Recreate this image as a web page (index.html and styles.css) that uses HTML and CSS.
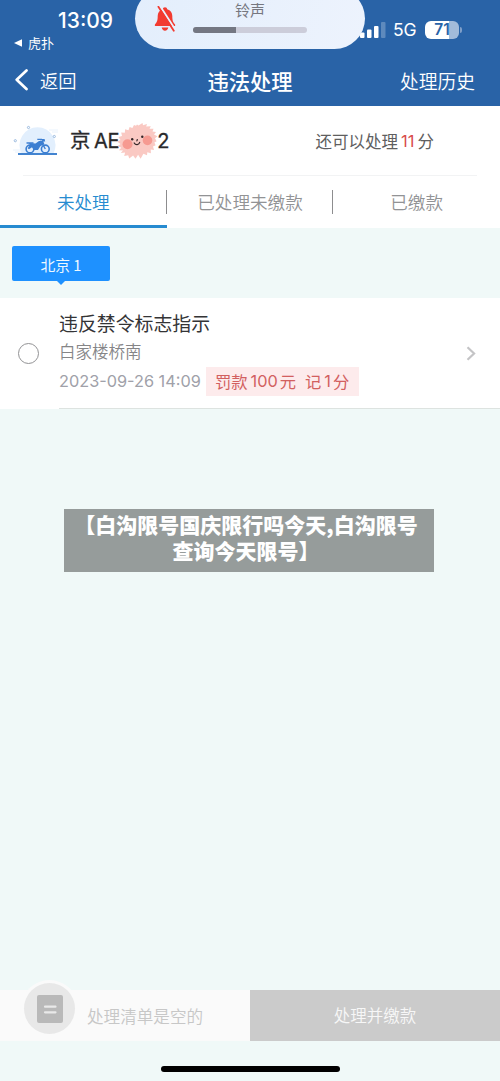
FILE: index.html
```html
<!DOCTYPE html>
<html lang="zh-CN">
<head>
<meta charset="utf-8">
<title>违法处理</title>
<link rel="stylesheet" href="styles.css">
</head>
<body>
<div class="screen">
  <header class="header">
    <div class="status">
      <div class="status-left">
        <span class="clock">13:09</span>
        <span class="back-app"><svg width="8" height="8" viewBox="0 0 8 8"><path d="M0 4 8 .2v7.6z" fill="#fff"/></svg>虎扑</span>
      </div>
      <div class="status-right">
        <svg class="signal" width="32" height="17" viewBox="0 0 32 17" fill="#fff"><rect x="3" y="10.5" width="4.5" height="5.5" rx="1"/><rect x="10" y="7.5" width="4.5" height="8.5" rx="1"/><rect x="17" y="4" width="4.5" height="12" rx="1"/><rect x="24" y="0" width="4.5" height="16" rx="1" opacity=".25"/></svg>
        <span class="network">5G</span>
        <span class="battery">71</span>
        <span class="battery-cap"></span>
      </div>
    </div>
    <div class="island">
      <svg class="bell" width="22" height="26" viewBox="0 0 22 26"><path d="M11 1.2c-1.3 0-2.1.8-2.2 2C5.4 4.2 3.7 6.7 3.7 10c0 4.8-.8 6.1-2.6 8.3-.7.9-.3 1.8.8 1.8h18.2c1.1 0 1.5-.9.8-1.8-1.8-2.2-2.6-3.5-2.6-8.3 0-3.3-1.7-5.8-5.1-6.8-.1-1.2-.9-2-2.2-2zM7.7 21.5c.3 2 1.6 3.2 3.3 3.2s3-1.2 3.3-3.2z" fill="#f23b31"/><path d="M6 0 21.5 24" stroke="#e8f1fd" stroke-width="2"/><path d="M4.4.8 19.8 24.8" stroke="#f23b31" stroke-width="1.8" stroke-linecap="round"/></svg>
      <div class="ring">
        <span class="ring-label">铃声</span>
        <div class="ring-track"><div class="ring-level"></div></div>
      </div>
    </div>
    <nav class="nav">
      <div class="nav-back"><svg width="14" height="22" viewBox="0 0 14 22"><path d="M12.5 1.5 2.7 10.7 12.5 20" fill="none" stroke="#fff" stroke-width="2.7" stroke-linecap="round" stroke-linejoin="round"/></svg><span>返回</span></div>
      <h1 class="nav-title">违法处理</h1>
      <div class="nav-history">处理历史</div>
    </nav>
  </header>

  <section class="vehicle">
    <svg class="moto" width="46" height="36" viewBox="0 0 46 36">
      <path d="M8.5 30.5a18 18 0 1 1 32 0z" fill="#e2effd"/>
      <path d="M36 7h9M39 9h6M0 27h9M2 29h7" stroke="#e9f2fc" stroke-width="1"/>
      <g fill="none" stroke="#9bbbe0" stroke-width="1"><circle cx="15.5" cy="4.5" r="1.1"/><circle cx="2.3" cy="17.7" r="1.1"/><circle cx="41.3" cy="13.5" r="1.1"/></g>
      <path d="M5 31h39" stroke="#4384d0" stroke-width="1.9"/>
      <g fill="none" stroke="#3c7fd2"><circle cx="17" cy="26" r="3.9" stroke-width="1.6"/><circle cx="32.3" cy="26" r="3.9" stroke-width="1.6"/><path d="m32.3 26-4.6-8.5M24.3 16.4H29M13.5 20h7" stroke-width="1.4"/></g>
      <path d="m16 20 6.5.5 3.5-2.6 4-.2 1.3 3.3-4 2.2-2.3 3.8h-4.3l-1.7-2.8-3 2-1.4-1 2.3-3.2zM28.3 16h3.3l.6 2.6-2.8-.4z" fill="#3c7fd2"/>
    </svg>
    <div class="plate"><span class="plate-region">京</span><span>AE</span>
      <svg class="sticker" width="42" height="38" viewBox="0 0 42 38"><path d="m17 3 2 .8 1-1.2 1.5.9L25.5 1l.5 2.2L30 2l-.8 2.5 4.6-.2-1.3 2.4 4 .1-1 2.7 3.5.5-2 2.5 3.5 1.8-2.5 1.9 1.6 3-2.2 1.3 1.2 2.8-2.6 1.3 1 3.3-3.3-.3.2 3.7-3.6-1.1-.3 3-3.6-1.4-2.8 5-2.5-4-2.6 4-2.4-3.2-3.9 3-1-3.4-4 .8.9-3.4-4.3.4L6 28.4l-4.2-.1 2.5-2.6L.6 24l3-2L0 19.6l3.5-1.7-2-3 3.5-1-.8-3.3 3.6.2.3-3.5 3.4 1 1.1-3.2 2.8 1z" fill="#fac9c3"/><circle cx="10.5" cy="22.3" r="5" fill="#f69a91"/><circle cx="30.5" cy="18.4" r="4.8" fill="#f69a91"/><g fill="#332426"><circle cx="15.2" cy="17.2" r="1.2"/><circle cx="25.3" cy="14.8" r="1.2"/></g><path d="m20.3 17.5-.4 1.4M17.2 21c1.4 2.3 4.8 2.1 5.5-.6" fill="none" stroke="#332426" stroke-width="1.2" stroke-linecap="round"/></svg><span>2</span></div>
    <div class="points">还可以处理<span class="points-value">11</span>分</div>
  </section>

  <nav class="tabs">
    <div class="tab tab-active">未处理</div>
    <div class="tab">已处理未缴款</div>
    <div class="tab">已缴款</div>
  </nav>

  <div class="city-row"><div class="city">北京 1</div></div>

  <article class="record">
    <span class="radio"></span>
    <div class="record-body">
      <h2 class="record-title">违反禁令标志指示</h2>
      <div class="record-place">白家楼桥南</div>
      <div class="record-meta"><time>2023-09-26 14:09</time><span class="penalty"><span>罚款</span><span class="num">100</span><span>元</span><span class="score">记</span><span class="num">1</span><span>分</span></span></div>
    </div>
    <svg class="chevron" width="10" height="15" viewBox="0 0 10 15"><path d="m1.5 1.2 6.6 6.3-6.6 6.3" fill="none" stroke="#c4c4c6" stroke-width="2.2"/></svg>
  </article>

  <main class="blank">
    <div class="caption">【白沟限号国庆限行吗今天,白沟限号<br>查询今天限号】</div>
  </main>

  <footer class="footer">
    <div class="list">
      <div class="list-icon"><svg width="26" height="28" viewBox="0 0 26 28"><rect width="26" height="28" rx="2" fill="#b9b9b9"/><path d="M8 11.7h10.5M8 17.3h10.5" stroke="#e9e9e9" stroke-width="2.2" stroke-linecap="round"/></svg></div>
      <span>处理清单是空的</span>
    </div>
    <div class="pay">处理并缴款</div>
  </footer>
  <div class="home"><div class="home-bar"></div></div>
</div>
</body>
</html>
```

FILE: styles.css
```css
* { box-sizing: border-box; }
body { margin: 0; background: #f0f9f8; font-family: "Noto Sans CJK SC", sans-serif; }
h1, h2 { margin: 0; }
svg { display: block; flex: none; }
.screen { width: 500px; height: 1081px; display: flex; flex-direction: column; overflow: hidden; background: #f0f9f8; white-space: nowrap; }

.header { position: relative; flex: none; height: 106px; background: #2963a7; color: #fff; }
.status { height: 56px; display: flex; justify-content: space-between; }
.status-left { padding: 8px 0 0 14px; display: flex; flex-direction: column; }
.clock { margin-left: 44px; font: 500 21px/26px Inter, sans-serif; }
.back-app { display: flex; align-items: center; gap: 6px; font-size: 13px; line-height: 17px; }
.status-right { display: flex; align-items: center; height: 22px; margin: 19px 38px 0 0; }
.signal { margin-right: 4px; }
.network { width: 32px; font: 400 17.5px/22px Inter, sans-serif; letter-spacing: -.2px; }
.battery { width: 34px; height: 18px; border-radius: 6px; background: linear-gradient(90deg, #fff 71%, #a2bbda 71%); color: #2963a7; text-align: center; font: 600 15.5px/18px Inter, sans-serif; }
.battery-cap { width: 2px; height: 6px; margin-left: 1px; border-radius: 0 3px 3px 0; background: #7f9fc9; }
.island { position: absolute; left: 135px; top: -12px; width: 230px; height: 61px; border-radius: 31px; background: linear-gradient(100deg, #e3eefc, #edf3fd); display: flex; align-items: flex-start; padding: 18px 0 0 19px; }
.ring { width: 114px; margin: -6px 0 0 17px; text-align: center; }
.ring-label { display: block; color: #76777f; font-size: 15px; line-height: 20px; }
.ring-track { height: 6px; margin-top: 7px; border-radius: 3px; background: #cccdda; overflow: hidden; }
.ring-level { width: 43px; height: 6px; background: #747782; }
.nav { height: 48px; display: grid; grid-template-columns: 1fr auto 1fr; align-items: center; padding: 0 25px 0 14px; font-size: 18.3px; font-weight: 350; }
.nav-back { display: flex; align-items: center; gap: 12px; }
.nav-title { font-size: 21.3px; font-weight: 500; padding-left: 11px; }
.nav-history { text-align: right; font-size: 18.8px; }

.vehicle { flex: none; height: 70px; background: #fff; display: flex; align-items: center; padding: 0 66px 0 13px; position: relative; }
.vehicle::after { content: ""; position: absolute; left: 23px; right: 23px; bottom: 0; height: 1px; background: #f2f3f4; }
.plate { display: flex; align-items: center; margin-left: 11px; color: #29292b; font: 400 20px/30px Inter, "Noto Sans CJK SC", sans-serif; -webkit-text-stroke: .3px #29292b; letter-spacing: -.4px; }
.plate-region { margin-right: 4px; font-size: 20.5px; }
.sticker { margin: 0 -2px 0 -2px; -webkit-text-stroke: 0; }
.points { margin-left: auto; display: flex; align-items: center; color: #5e5e60; font-size: 16.5px; }
.points-value { margin: 0 3px; color: #d84c4c; font: 400 16.5px/22px Inter, sans-serif; }

.tabs { flex: none; height: 52px; display: grid; grid-template-columns: repeat(3, 1fr); background: #fff; }
.tab { position: relative; color: #929395; font-size: 17.6px; line-height: 51px; text-align: center; font-weight: 350; }
.tab-active { color: #268bd0; }
.tab-active::before { content: ""; position: absolute; left: 0; right: 0; bottom: 0; height: 3px; background: #268bd0; }
.tab:not(:last-child)::after { content: ""; position: absolute; right: 0; top: 14px; width: 1px; height: 24px; background: #8d8d8f; }

.city-row { flex: none; height: 70px; padding: 18px 0 0 12px; }
.city { position: relative; width: 98px; height: 35px; border-radius: 2px; background: #1e91ff; color: #edf8ff; font-size: 14.8px; line-height: 38px; text-align: center; }
.city::after { content: ""; position: absolute; left: 44px; top: 34px; border: 5px solid transparent; border-top-color: #1e91ff; border-bottom: 0; }

.record { position: relative; flex: none; height: 111px; background: #fff; display: flex; align-items: center; padding: 0 24px 0 18px; }
.record::after { content: ""; position: absolute; left: 59px; right: 0; bottom: 0; height: 1px; background: #dde3e0; }
.radio { width: 21px; height: 21px; border: 1.5px solid #929294; border-radius: 50%; }
.record-body { margin: -2px 0 0 20px; }
.record-title { color: #343436; font-size: 18.9px; line-height: 28px; font-weight: 400; }
.record-place { margin-bottom: 2px; color: #858587; font-size: 16.5px; line-height: 28px; font-weight: 350; }
.record-meta { display: flex; align-items: center; color: #a0a1a9; font: 400 16.3px/29px Inter, sans-serif; }
.record-meta time { width: 147px; }
.penalty { display: flex; height: 29px; width: 153px; padding-left: 9px; background: #fdebec; color: #d2605f; font: 400 16.3px/28px "Noto Sans CJK SC", sans-serif; }
.num { margin: 0 2px 0 3px; font-family: Inter, sans-serif; }
.score { margin-left: 9px; }
.chevron { margin-left: auto; }

.blank { flex: 1; min-height: 0; padding: 100px 66px 0 64px; }
.caption { height: 63px; padding: 2px 6px 0 0; background: #969c9b; color: #fff; font-size: 21px; font-weight: 900; line-height: 26px; text-align: center; }

.footer { flex: none; height: 51px; display: grid; grid-template-columns: 1fr 1fr; }
.list { position: relative; display: flex; align-items: center; padding-left: 87px; background: #fafafa; color: #c7c7c7; font-size: 16.6px; font-weight: 350; }
.list-icon { position: absolute; left: 24px; top: -7px; width: 51px; height: 51px; border-radius: 50%; background: #e8e8e8; box-shadow: 0 0 0 3px #fafafa; display: flex; align-items: center; justify-content: center; }
.pay { background: #cbcbcb; color: #f7f7f7; text-align: center; font-size: 16.5px; line-height: 51px; font-weight: 350; }
.home { flex: none; height: 40px; display: flex; justify-content: center; padding-top: 25px; }
.home-bar { width: 179px; height: 6px; border-radius: 3px; background: #000; }
```
